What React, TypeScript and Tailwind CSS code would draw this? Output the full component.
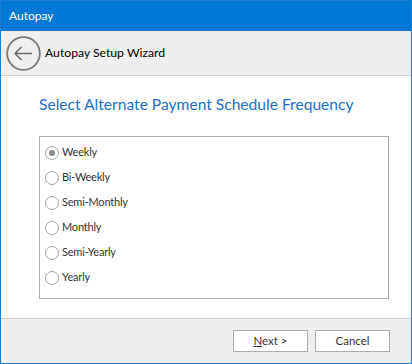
import React from "react";

const options = ["Weekly", "Bi-Weekly", "Semi-Monthly", "Monthly", "Semi-Yearly", "Yearly"];

export default function App() {
  return (
    <div
      className="w-[412px] h-[364px] border border-[#1a7fd4] flex flex-col bg-white text-[#222]"
      style={{ fontFamily: 'Lato, "Noto Sans", sans-serif' }}
    >
      <div className="h-[30px] bg-[#0078d7] text-white text-[12px] flex items-center pl-[8px] shrink-0">
        Autopay
      </div>
      <div className="h-[45px] bg-[#efefef] border-b border-[#d4d4d4] flex items-center shrink-0">
        <div className="ml-[5px] w-[35px] h-[35px] flex items-center justify-center">
          <svg width="35" height="35" viewBox="0 0 35 35">
            <circle cx="17.5" cy="17.5" r="16.3" fill="none" stroke="#7a7a7a" strokeWidth="1.8" />
            <path d="M9 17.5 H26 M9 17.5 L15.5 11 M9 17.5 L15.5 24" fill="none" stroke="#6a6a6a" strokeWidth="1.6" />
          </svg>
        </div>
        <div className="ml-[4px] text-[12.2px] text-black">Autopay Setup Wizard</div>
      </div>
      <div className="h-[242px] shrink-0 pl-[38px] pt-[17px]">
        <div className="text-[15.6px] leading-[22px] text-[#1c6fc6]">Select Alternate Payment Schedule Frequency</div>
        <div className="mt-[21px] w-[350px] h-[163px] border border-[#adadad] pt-[3px] pl-[5px]">
          {options.map((o, i) => (
            <div key={o} className="h-[25px] flex items-center text-[11px] tracking-[-0.2px] text-[#333]">
              <div className="w-[14px] h-[14px] rounded-full border border-[#a3a3a3] bg-white flex items-center justify-center">
                {i === 0 && <div className="w-[6px] h-[6px] rounded-full bg-[#8a8a8a]" />}
              </div>
              <span className="ml-[3px]">{o}</span>
            </div>
          ))}
        </div>
      </div>
      <div className="flex-1 bg-[#efefef] border-t border-[#d0d0d0] flex justify-end items-start pt-[11px] pr-[21px] gap-[7px]">
        <button className="w-[75px] h-[22px] bg-white border border-[#adadad] text-[11.5px] text-[#333] flex items-center justify-center">
          <span><span className="underline">N</span>ext &gt;</span>
        </button>
        <button className="w-[75px] h-[22px] bg-white border border-[#adadad] text-[11.5px] text-[#333] flex items-center justify-center">
          Cancel
        </button>
      </div>
    </div>
  );
}
